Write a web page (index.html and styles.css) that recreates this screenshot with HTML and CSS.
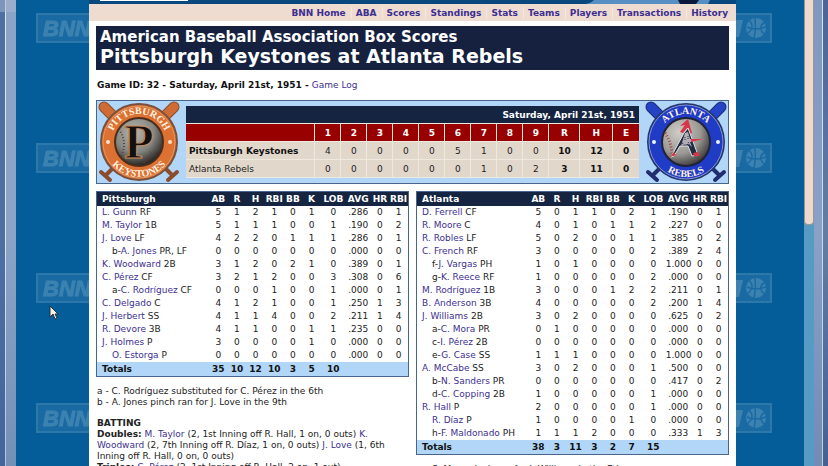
FILE: index.html
```html
<!doctype html>
<html lang="en">
<head>
	<meta charset="utf-8">
	<meta name="viewport" content="width=device-width, initial-scale=1">
	<title>ABA Box Scores, Pittsburgh Keystones at Atlanta Rebels</title>
	<link rel="stylesheet" href="styles.css">
</head>
<body>
<div class="window">

<div class="edge edge-left"></div>

<svg class="gutter gutter-left" aria-hidden="true">
	<defs>
		<pattern id="bnn-left" width="160" height="130" patternUnits="userSpaceOnUse">
			<rect x="21" y="14" width="120" height="28" fill="#1969a3" stroke="#2d78ab" stroke-width="2"/>
			<text class="mark" x="27" y="36">BNN</text>
		</pattern>
	</defs>
	<rect width="100%" height="100%" fill="url(#bnn-left)"/>
</svg>

<div class="page">
<div class="banner">
	<div class="banner-box"></div>
	<svg class="banner-art" width="150" height="4" viewBox="0 0 150 4" aria-hidden="true">
		<path d="M0 4C4 3 6 2 8 0H124L122 4Z" fill="#568fc4"/>
		<path d="M92 0H113L110 4H94Z" fill="#0b1839"/>
	</svg>
</div>
<nav class="nav">
<a href="#">BNN Home</a>
<a href="#">ABA</a>
<a href="#">Scores</a>
<a href="#">Standings</a>
<a href="#">Stats</a>
<a href="#">Teams</a>
<a href="#">Players</a>
<a href="#">Transactions</a>
<a href="#">History</a>
</nav>

<main class="content">
<header class="title">
	<div class="league">American Baseball Association Box Scores</div>
	<h1>Pittsburgh Keystones at Atlanta Rebels</h1>
</header>

<p class="game-id">Game ID: 32 - Saturday, April 21st, 1951 - <a href="#">Game Log</a></p>

<section class="scorebox">
<svg class="logo" viewBox="0 0 82 82" role="img" aria-label="Pittsburgh Keystones">
	<defs>
		<radialGradient id="ball-dark" cx="40%" cy="30%" r="70%">
			<stop offset="0" stop-color="#b5b5b0"/>
			<stop offset=".6" stop-color="#85857f"/>
			<stop offset="1" stop-color="#292723"/>
		</radialGradient>
		<path id="p-top" d="M13 41a28 28 0 0 1 56 0"/>
		<path id="p-bottom" d="M6 41a35 35 0 0 0 70 0"/>
	</defs>
	<g stroke="#8a4c2c">
		<path d="M6 6 20 20M76 6 62 20" stroke-width="11" stroke-linecap="round"/>
		<path d="M18 18 74 74M64 18 8 74" stroke-width="4"/>
		<path d="M70 79 79 71M12 79 3 71" stroke-width="4" stroke-linecap="round"/>
		<path d="M6 6 20 20M76 6 62 20" stroke="#cf6c35" stroke-width="9" stroke-linecap="round"/>
	</g>
	<circle cx="41" cy="41" r="38" fill="#dc7131" stroke="#77513d" stroke-width="2"/>
	<circle cx="41" cy="41" r="36" fill="none" stroke="#e59460"/>
	<circle cx="41" cy="41" r="24" fill="url(#ball-dark)" stroke="#4b2d1e" stroke-width="2"/>
	<path d="M21 28Q30 42 23 55M46 62Q49 53 62 49" fill="none" stroke="#52443f" stroke-width="2" stroke-dasharray="1 2"/>
	<text class="ring-text"><textPath href="#p-top" startOffset="50%">PITTSBURGH</textPath></text>
	<text class="ring-text"><textPath href="#p-bottom" startOffset="50%">KEYSTONES</textPath></text>
	<text class="logo-p" x="41" y="57">P</text>
	<circle cx="10" cy="41" r="2" fill="#f7e2cb"/>
	<circle cx="72" cy="41" r="2" fill="#f7e2cb"/>
</svg>

<table class="linescore">
<colgroup><col class="team"><col span="9"><col class="run"><col class="hit"><col class="err"></colgroup>
<thead>
<tr class="date"><th colspan="13">Saturday, April 21st, 1951</th></tr>
<tr class="innings"><td></td><th>1</th><th>2</th><th>3</th><th>4</th><th>5</th><th>6</th><th>7</th><th>8</th><th>9</th><th>R</th><th>H</th><th>E</th></tr>
</thead>
<tbody>
<tr><td><b>Pittsburgh Keystones</b></td><td>4</td><td>0</td><td>0</td><td>0</td><td>0</td><td>5</td><td>1</td><td>0</td><td>0</td><td><b>10</b></td><td><b>12</b></td><td><b>0</b></td></tr>
<tr><td>Atlanta Rebels</td><td>0</td><td>0</td><td>0</td><td>0</td><td>0</td><td>0</td><td>1</td><td>0</td><td>2</td><td><b>3</b></td><td><b>11</b></td><td><b>0</b></td></tr>
</tbody>
</table>

<svg class="logo" viewBox="0 0 82 82" role="img" aria-label="Atlanta Rebels">
	<defs>
		<radialGradient id="ball-light" cx="35%" cy="30%" r="75%">
			<stop offset="0" stop-color="#d0cdc8"/>
			<stop offset=".6" stop-color="#9a9893"/>
			<stop offset="1" stop-color="#393735"/>
		</radialGradient>
		<path id="a-top" d="M13 41a28 28 0 0 1 56 0"/>
		<path id="a-bottom" d="M6 41a35 35 0 0 0 70 0"/>
	</defs>
	<g stroke="#222c70">
		<path d="M6 6 20 20M76 6 62 20" stroke-width="11" stroke-linecap="round"/>
		<path d="M18 18 74 74M64 18 8 74" stroke-width="4"/>
		<path d="M70 79 79 71M12 79 3 71" stroke-width="4" stroke-linecap="round"/>
		<path d="M6 6 20 20M76 6 62 20" stroke="#2543c6" stroke-width="9" stroke-linecap="round"/>
	</g>
	<circle cx="41" cy="41" r="38" fill="#203bc5" stroke="#25366e" stroke-width="2"/>
	<circle cx="41" cy="41" r="37" fill="none" stroke="#8295d0"/>
	<circle cx="41" cy="41" r="24" fill="url(#ball-light)" stroke="#202235" stroke-width="2"/>
	<path d="M20 32Q26 40 27 53" fill="none" stroke="#9f4142" stroke-width="3" stroke-dasharray="1 2"/>
	<path d="M35 25 43 18 47 32 44 33 42 27 38 32 35 31 40 24Z" fill="#d93549"/>
	<path d="M39 32 43 27 53 54 47 55 43 45 35 45 29 55 26 56Z" fill="#222b43" stroke="#e1dedf"/>
	<path d="M40 32 43 31 45 38 60 38 45 41 47 46 43 43 36 45Z" fill="#b3adb5"/>
	<path d="M46 38H59L46 41ZM25 56 29 51 31 54ZM48 52 53 51 55 55 49 55Z" fill="#d93549"/>
	<path d="M40 36V40M43 35V39M37 42 40 44M43 41 46 46" stroke="#222b43" stroke-dasharray="1 1"/>
	<text class="ring-text"><textPath href="#a-top" startOffset="50%">ATLANTA</textPath></text>
	<text class="ring-text"><textPath href="#a-bottom" startOffset="50%">REBELS</textPath></text>
	<circle cx="9" cy="41" r="2" fill="#eef3ff"/>
	<circle cx="73" cy="41" r="2" fill="#eef3ff"/>
</svg>
</section>

<div class="teams">
<section class="side">
<table class="batting">
<colgroup><col class="player"><col span="6"><col class="wide" span="2"><col span="2"></colgroup>
<thead>
<tr><th>Pittsburgh</th><th>AB</th><th>R</th><th>H</th><th>RBI</th><th>BB</th><th>K</th><th>LOB</th><th>AVG</th><th>HR</th><th>RBI</th></tr>
</thead>
<tbody>
<tr><td><a href="#">L. Gunn</a> RF</td><td>5</td><td>1</td><td>2</td><td>1</td><td>0</td><td>1</td><td>0</td><td>.286</td><td>0</td><td>1</td></tr>
<tr><td><a href="#">M. Taylor</a> 1B</td><td>5</td><td>1</td><td>1</td><td>1</td><td>0</td><td>0</td><td>1</td><td>.190</td><td>0</td><td>2</td></tr>
<tr><td><a href="#">J. Love</a> LF</td><td>4</td><td>2</td><td>2</td><td>0</td><td>1</td><td>1</td><td>1</td><td>.286</td><td>0</td><td>1</td></tr>
<tr><td class="sub">b-<a href="#">A. Jones</a> PR, LF</td><td>0</td><td>0</td><td>0</td><td>0</td><td>0</td><td>0</td><td>0</td><td>.000</td><td>0</td><td>0</td></tr>
<tr><td><a href="#">K. Woodward</a> 2B</td><td>3</td><td>1</td><td>2</td><td>0</td><td>2</td><td>1</td><td>0</td><td>.389</td><td>0</td><td>1</td></tr>
<tr><td><a href="#">C. Pérez</a> CF</td><td>3</td><td>2</td><td>1</td><td>2</td><td>0</td><td>0</td><td>3</td><td>.308</td><td>0</td><td>6</td></tr>
<tr><td class="sub">a-<a href="#">C. Rodríguez</a> CF</td><td>0</td><td>0</td><td>0</td><td>1</td><td>0</td><td>0</td><td>1</td><td>.000</td><td>0</td><td>1</td></tr>
<tr><td><a href="#">C. Delgado</a> C</td><td>4</td><td>1</td><td>2</td><td>1</td><td>0</td><td>0</td><td>1</td><td>.250</td><td>1</td><td>3</td></tr>
<tr><td><a href="#">J. Herbert</a> SS</td><td>4</td><td>1</td><td>1</td><td>4</td><td>0</td><td>0</td><td>2</td><td>.211</td><td>1</td><td>4</td></tr>
<tr><td><a href="#">R. Devore</a> 3B</td><td>4</td><td>1</td><td>1</td><td>0</td><td>0</td><td>1</td><td>1</td><td>.235</td><td>0</td><td>0</td></tr>
<tr><td><a href="#">J. Holmes</a> P</td><td>3</td><td>0</td><td>0</td><td>0</td><td>0</td><td>1</td><td>0</td><td>.000</td><td>0</td><td>0</td></tr>
<tr><td class="sub"><a href="#">O. Estorga</a> P</td><td>0</td><td>0</td><td>0</td><td>0</td><td>0</td><td>0</td><td>0</td><td>.000</td><td>0</td><td>0</td></tr>
</tbody>
<tfoot>
<tr><td>Totals</td><td>35</td><td>10</td><td>12</td><td>10</td><td>3</td><td>5</td><td>10</td><td></td><td></td><td></td></tr>
</tfoot>
</table>
<div class="notes">
<p>a - C. Rodríguez substituted for C. Pérez in the 6th<br>b - A. Jones pinch ran for J. Love in the 9th</p>
<p><b>BATTING</b><br>
<b>Doubles:</b> <a href="#">M. Taylor</a> (2, 1st Inning off R. Hall, 1 on, 0 outs) <a href="#">K. Woodward</a> (2, 7th Inning off R. Díaz, 1 on, 0 outs) <a href="#">J. Love</a> (1, 6th Inning off R. Hall, 0 on, 0 outs)<br>
<b>Triples:</b> <a href="#">C. Pérez</a> (2, 1st Inning off R. Hall, 2 on, 1 out)</p>
</div>
</section>

<section class="side">
<table class="batting">
<colgroup><col class="player"><col span="6"><col class="wide" span="2"><col span="2"></colgroup>
<thead>
<tr><th>Atlanta</th><th>AB</th><th>R</th><th>H</th><th>RBI</th><th>BB</th><th>K</th><th>LOB</th><th>AVG</th><th>HR</th><th>RBI</th></tr>
</thead>
<tbody>
<tr><td><a href="#">D. Ferrell</a> CF</td><td>5</td><td>0</td><td>1</td><td>1</td><td>0</td><td>2</td><td>1</td><td>.190</td><td>0</td><td>1</td></tr>
<tr><td><a href="#">R. Moore</a> C</td><td>4</td><td>0</td><td>1</td><td>0</td><td>1</td><td>1</td><td>2</td><td>.227</td><td>0</td><td>0</td></tr>
<tr><td><a href="#">R. Robles</a> LF</td><td>5</td><td>0</td><td>2</td><td>0</td><td>0</td><td>1</td><td>1</td><td>.385</td><td>0</td><td>2</td></tr>
<tr><td><a href="#">C. French</a> RF</td><td>3</td><td>0</td><td>0</td><td>0</td><td>0</td><td>0</td><td>2</td><td>.389</td><td>2</td><td>4</td></tr>
<tr><td class="sub">f-<a href="#">J. Vargas</a> PH</td><td>1</td><td>0</td><td>1</td><td>0</td><td>0</td><td>0</td><td>0</td><td>1.000</td><td>0</td><td>0</td></tr>
<tr><td class="sub">g-<a href="#">K. Reece</a> RF</td><td>1</td><td>0</td><td>0</td><td>0</td><td>0</td><td>0</td><td>2</td><td>.000</td><td>0</td><td>0</td></tr>
<tr><td><a href="#">M. Rodríguez</a> 1B</td><td>3</td><td>0</td><td>0</td><td>0</td><td>1</td><td>2</td><td>2</td><td>.211</td><td>0</td><td>1</td></tr>
<tr><td><a href="#">B. Anderson</a> 3B</td><td>4</td><td>0</td><td>0</td><td>0</td><td>0</td><td>0</td><td>2</td><td>.200</td><td>1</td><td>4</td></tr>
<tr><td><a href="#">J. Williams</a> 2B</td><td>3</td><td>0</td><td>2</td><td>0</td><td>0</td><td>0</td><td>0</td><td>.625</td><td>0</td><td>2</td></tr>
<tr><td class="sub">a-<a href="#">C. Mora</a> PR</td><td>0</td><td>1</td><td>0</td><td>0</td><td>0</td><td>0</td><td>0</td><td>.000</td><td>0</td><td>0</td></tr>
<tr><td class="sub">c-<a href="#">I. Pérez</a> 2B</td><td>0</td><td>0</td><td>0</td><td>0</td><td>0</td><td>0</td><td>0</td><td>.000</td><td>0</td><td>0</td></tr>
<tr><td class="sub">e-<a href="#">G. Case</a> SS</td><td>1</td><td>1</td><td>1</td><td>0</td><td>0</td><td>0</td><td>0</td><td>1.000</td><td>0</td><td>0</td></tr>
<tr><td><a href="#">A. McCabe</a> SS</td><td>3</td><td>0</td><td>2</td><td>0</td><td>0</td><td>0</td><td>1</td><td>.500</td><td>0</td><td>0</td></tr>
<tr><td class="sub">b-<a href="#">N. Sanders</a> PR</td><td>0</td><td>0</td><td>0</td><td>0</td><td>0</td><td>0</td><td>0</td><td>.417</td><td>0</td><td>2</td></tr>
<tr><td class="sub">d-<a href="#">C. Copping</a> 2B</td><td>1</td><td>0</td><td>0</td><td>0</td><td>0</td><td>0</td><td>1</td><td>.000</td><td>0</td><td>0</td></tr>
<tr><td><a href="#">R. Hall</a> P</td><td>2</td><td>0</td><td>0</td><td>0</td><td>0</td><td>0</td><td>1</td><td>.000</td><td>0</td><td>0</td></tr>
<tr><td class="sub"><a href="#">R. Díaz</a> P</td><td>1</td><td>0</td><td>0</td><td>0</td><td>0</td><td>1</td><td>0</td><td>.000</td><td>0</td><td>0</td></tr>
<tr><td class="sub">h-<a href="#">F. Maldonado</a> PH</td><td>1</td><td>1</td><td>1</td><td>2</td><td>0</td><td>0</td><td>0</td><td>.333</td><td>1</td><td>3</td></tr>
</tbody>
<tfoot>
<tr><td>Totals</td><td>38</td><td>3</td><td>11</td><td>3</td><td>2</td><td>7</td><td>15</td><td></td><td></td><td></td></tr>
</tfoot>
</table>
<div class="notes">
<p>a - C. Mora pinch ran for J. Williams in the 7th</p>
</div>
</section>
</div>
</main>
</div>

<svg class="gutter gutter-right" aria-hidden="true">
	<defs>
		<pattern id="bnn-right" width="160" height="130" patternUnits="userSpaceOnUse">
			<rect x="-80" y="14" width="115" height="28" fill="#1969a3" stroke="#2d78ab" stroke-width="2"/>
			<path d="M0 20H7L3 37H0Z" fill="#3b82b1"/>
			<circle cx="20" cy="28" r="10" fill="#3b82b1"/>
			<path d="M13 20Q20 27 11 34M19 18Q20 30 18 38M29 22Q21 27 28 34M11 27Q19 31 30 27" fill="none" stroke="#1969a3" stroke-width="1.5"/>
		</pattern>
	</defs>
	<rect width="100%" height="100%" fill="url(#bnn-right)"/>
</svg>

<div class="scrollbar"><div class="thumb"></div></div>
<div class="edge edge-right"></div>
</div>

<svg class="cursor" viewBox="0 0 10 16" aria-hidden="true">
	<path d="M1 1V12L4 9 6 14 8 13 6 9H9Z" fill="#f3f0ed" stroke="#27323a"/>
</svg>
</body>
</html>
```
FILE: styles.css
```css
body {
	margin: 0;
	font-family: "DejaVu Sans", Verdana, sans-serif;
	font-size: 9px;
	color: #222;
}

a {
	color: #3d2f91;
	text-decoration: none;
}

p {
	margin: 0;
}

table {
	table-layout: fixed;
	width: 100%;
}

th, td {
	padding: 0;
	text-align: center;
	white-space: nowrap;
}

.window {
	display: flex;
	height: 100vh;
	overflow: hidden;
	background: #045c98;
}

.edge {
	flex: none;
}

.edge-left {
	width: 16px;
	background: linear-gradient(#a8b5cd88 12px, #375a9400 12px, #375a9400 50%, #1b3f7833), linear-gradient(90deg, #4e6fa4 5px, #dce4ef 5px, #dce4ef 6px, #8ba4c5 6px);
}

.edge-right {
	width: 14px;
	background: linear-gradient(#375a9400, #aabbd844 50%, #1b3f7822), linear-gradient(90deg, #8097bf 8px, #dce4ef 8px, #dce4ef 9px, #4a6696 9px);
}

.gutter {
	flex: none;
	height: 100%;
}

.gutter-left {
	width: 73px;
}

.gutter-right {
	width: 68px;
}

.mark {
	font: italic bold 22px "Liberation Sans", Arial, sans-serif;
	fill: #3b82b1;
	stroke: #3b82b1;
}

.page {
	flex: 1;
	min-width: 0;
	background: #fff;
}

.banner {
	display: flex;
	justify-content: space-between;
	height: 4px;
	padding-left: 11px;
	background: #08487f;
}

.banner-box {
	width: 88px;
	height: 1px;
	background: #fff;
}

.nav {
	display: flex;
	justify-content: flex-end;
	gap: 5px;
	padding: 3px 8px 2px;
	line-height: 12px;
	font-weight: bold;
	background: #eedcd0;
}

.nav a + a {
	padding-left: 4px;
	border-left: 1px solid #f4e8e0;
}

.content {
	padding: 5px 7px 0;
}

.title {
	padding: 3px 4px;
	color: #fff;
	background: #16213f;
	font-weight: bold;
}

.league {
	font-size: 15px;
	line-height: 16px;
}

h1 {
	margin: 0;
	font-size: 19px;
	line-height: 22px;
}

.game-id {
	padding: 9px 1px;
	font-weight: bold;
	line-height: 12px;
	color: #111;
}

.game-id a {
	font-weight: normal;
}

.scorebox {
	display: flex;
	align-items: center;
	gap: 6px;
	padding: 0 1px;
	border: 1px solid #48658c;
	background: #b1d6f8;
}

.logo {
	flex: none;
	width: 82px;
	height: 82px;
}

.ring-text {
	font: bold 10px "Liberation Serif", "Times New Roman", serif;
	text-anchor: middle;
	fill: #fff2e2;
}

.logo-p {
	font: bold 48px "Liberation Serif", "Times New Roman", serif;
	text-anchor: middle;
	fill: #111;
	stroke: #c98a5c;
	stroke-width: 1px;
}

.linescore {
	flex: 1;
	min-width: 0;
	border-collapse: collapse;
}

.linescore col {
	width: 26px;
}

.linescore .team {
	width: auto;
}

.linescore .run {
	width: 31px;
}

.linescore .hit {
	width: 33px;
}

.linescore th, .linescore td {
	height: 17px;
	border-bottom: 1px solid #eee8dd;
	border-left: 1px solid #eee8dd;
	background: #e1d7ca;
}

.linescore td:first-child {
	padding-left: 3px;
	border-left: 0;
	text-align: left;
}

.linescore .date th {
	padding-right: 4px;
	border-left: 0;
	color: #fff;
	background: #152541;
	text-align: right;
}

.linescore .innings th, .linescore .innings td {
	color: #fff;
	background: #980000;
}

.linescore b {
	color: #111;
}

.teams {
	display: flex;
	align-items: flex-start;
	gap: 7px;
	margin-top: 7px;
}

.side {
	flex: 1;
	min-width: 0;
}

.batting {
	border: 1px solid #48658c;
	border-spacing: 0;
	line-height: 13px;
}

.batting col {
	width: 6%;
}

.batting .player {
	width: 36%;
}

.batting .wide {
	width: 8%;
}

.batting th {
	color: #fff;
	background: #152541;
	line-height: 14px;
}

.batting th:first-child, .batting td:first-child {
	padding-left: 5px;
	text-align: left;
}

.batting td.sub:first-child {
	padding-left: 15px;
}

.batting tfoot td {
	color: #111;
	background: #b1d6f8;
	font-weight: bold;
	line-height: 14px;
}

.notes {
	padding: 9px 1px;
	line-height: 11px;
}

.notes p {
	margin-bottom: 10px;
}

.scrollbar {
	flex: none;
	width: 10px;
	background: #579bc5;
}

.thumb {
	height: 48vh;
	border: 1px solid #9c9496;
	border-top: 0;
	border-radius: 0 0 4px 4px;
	background: #eed9ce;
}

.cursor {
	position: absolute;
	left: 49px;
	top: 305px;
	width: 10px;
	height: 16px;
}
```
